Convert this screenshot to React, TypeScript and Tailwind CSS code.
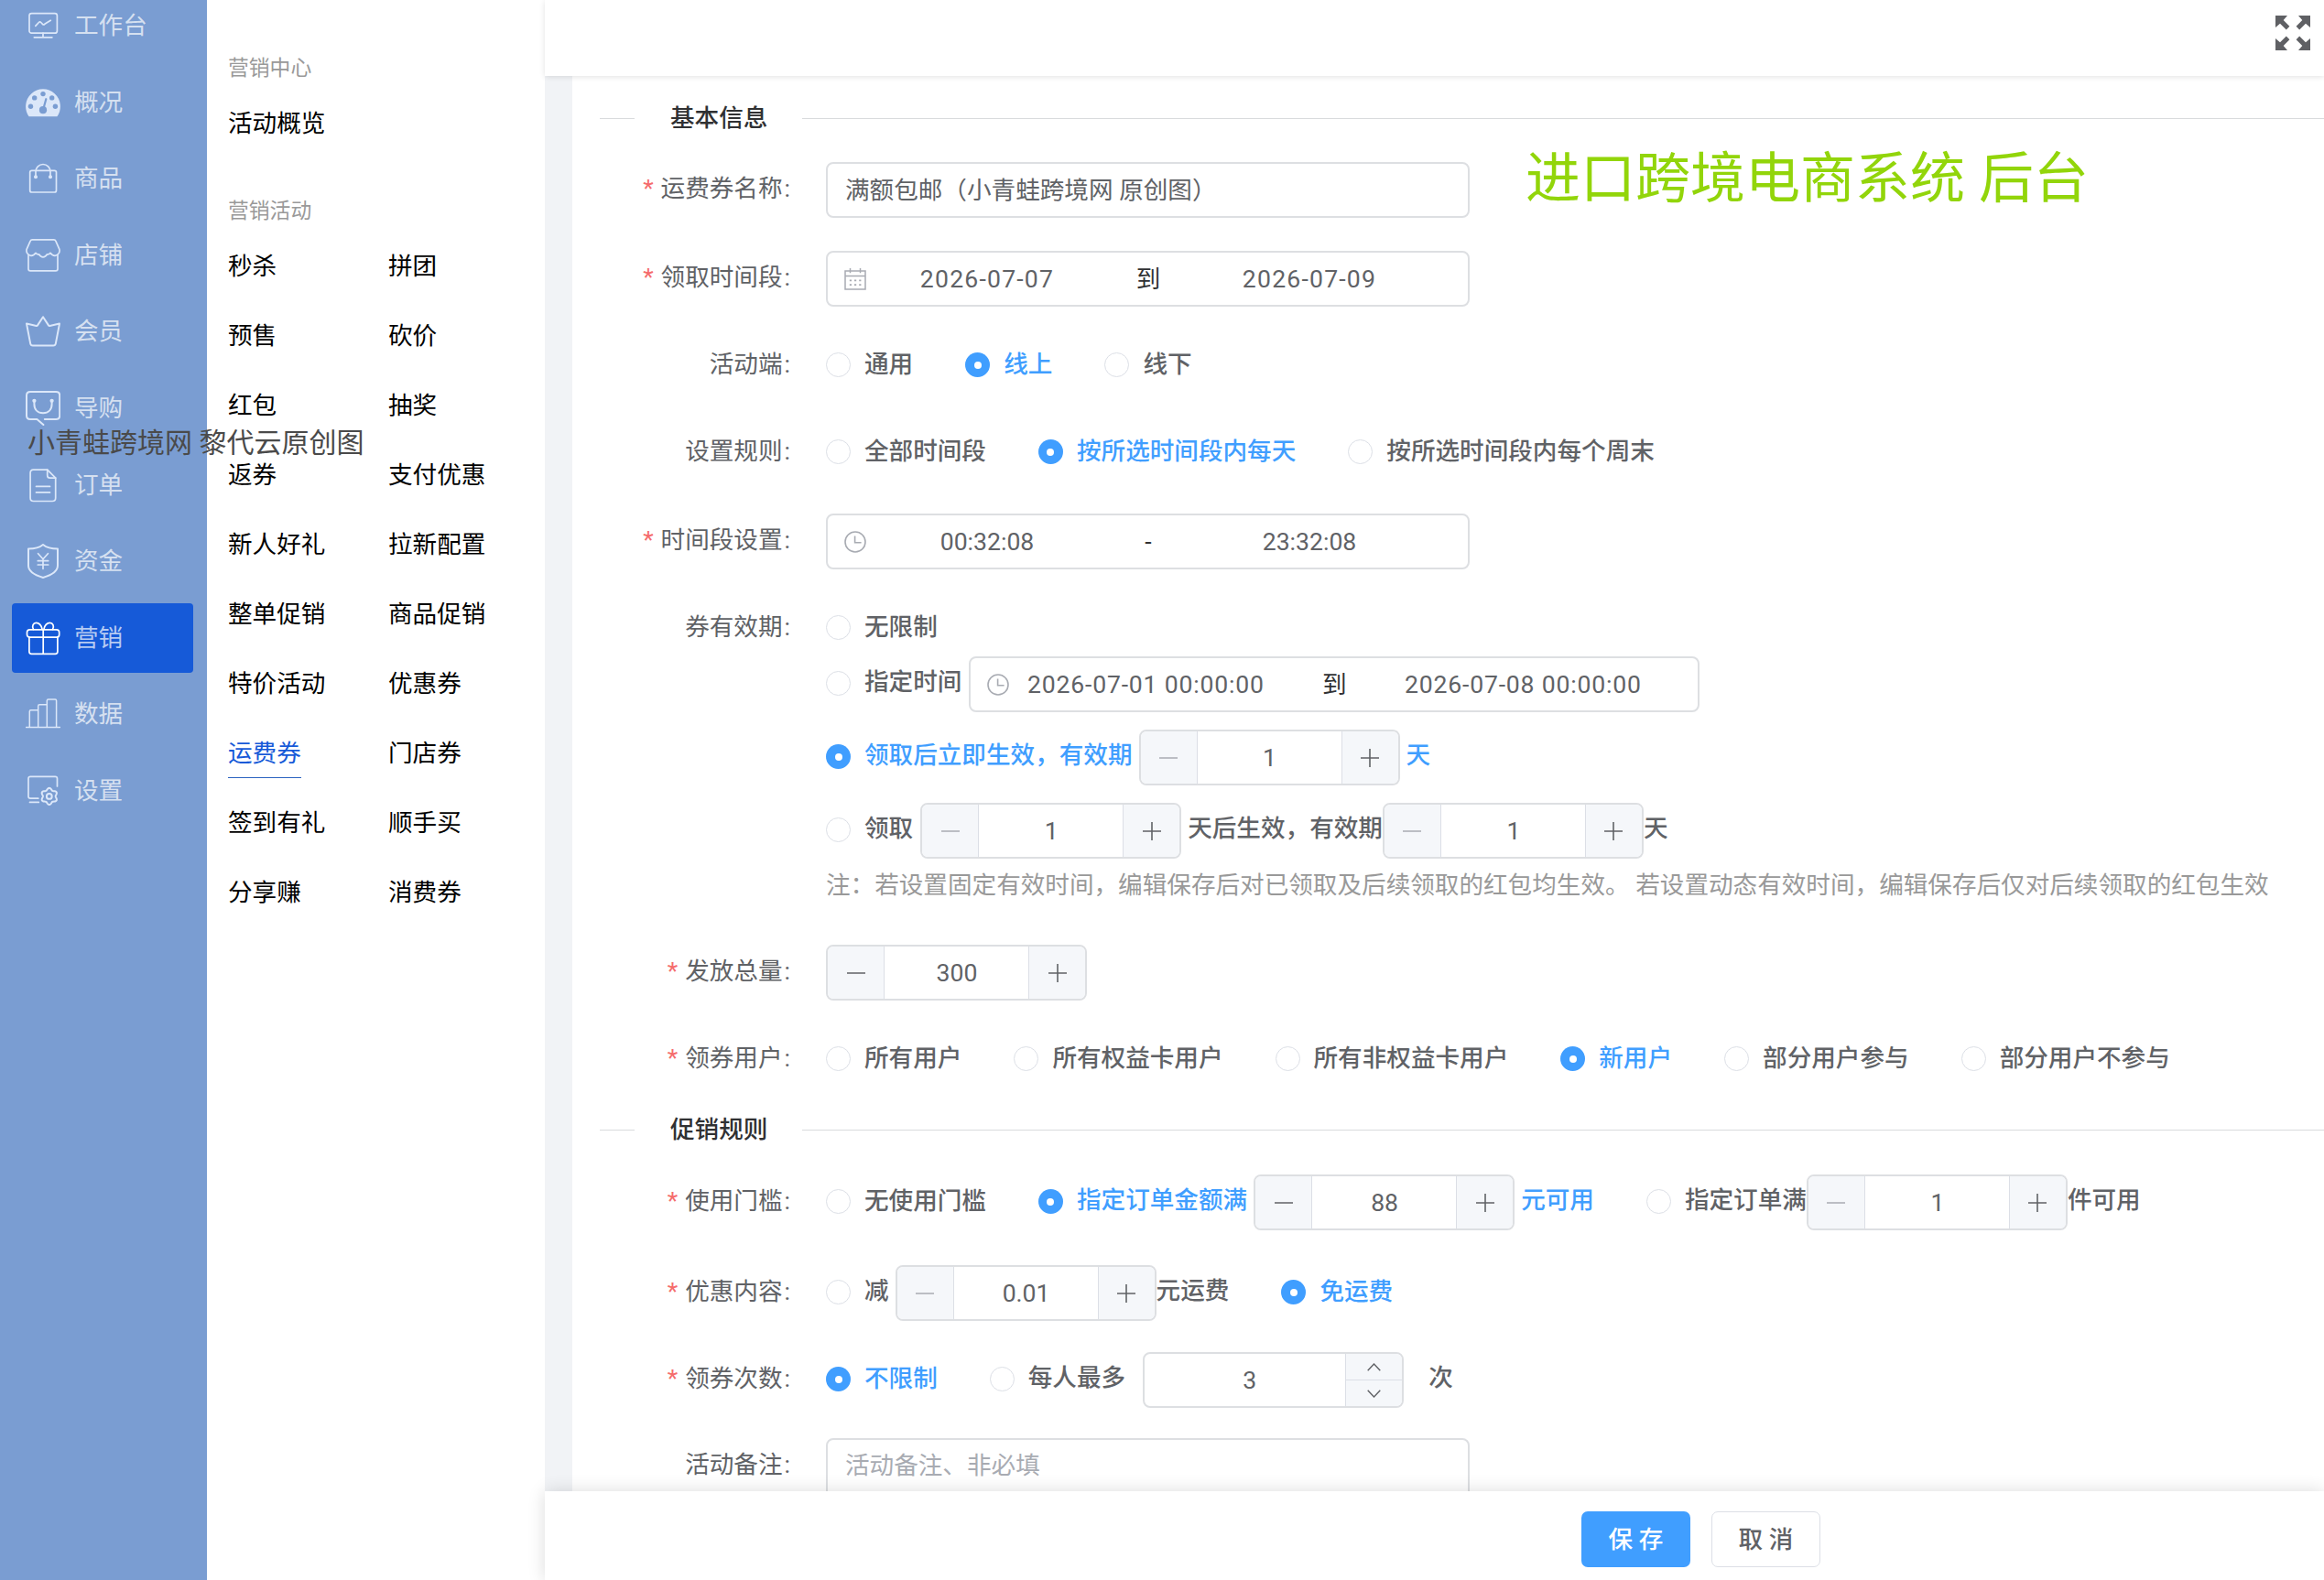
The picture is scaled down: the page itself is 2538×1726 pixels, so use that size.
import React, { ReactNode, useState } from "react";
import clsx from "clsx";

/* ---------- sidebar icons (38x38 canvas) ---------- */

function gearPath(cx: number, cy: number) {
  const points: string[] = [];
  for (let i = 0; i < 96; i++) {
    const a = (i / 96) * Math.PI * 2;
    const r = 8 + 1.1 * Math.cos(6 * (a + Math.PI / 2));
    points.push(`${(cx + r * Math.cos(a)).toFixed(2)} ${(cy + r * Math.sin(a)).toFixed(2)}`);
  }
  return `M${points.join("L")}Z`;
}

const icons: Record<string, ReactNode> = {
  workbench: (
    <>
      <rect x="4" y="5.6" width="30.4" height="21.6" rx="2.5" />
      <path d="M19 27.2v4.4M9.3 31.8h19.6M10.8 19.4l3.6-3.9c.8-.8 1.5-.8 2.3 0l1.8 1.8c.8.8 1.5.8 2.3 0l6.5-4" />
    </>
  ),
  overview: (
    <>
      <path d="M3.6 34.2A18.9 18.9 0 1 1 34.4 34.2Z" fill="currentColor" stroke="none" />
      <g fill="#7a9dd2" stroke="none">
        <circle cx="19" cy="9.6" r="2.7" />
        <circle cx="9.7" cy="13.9" r="2.7" />
        <circle cx="28.7" cy="13.9" r="2.7" />
        <circle cx="5.5" cy="23.2" r="2.7" />
        <circle cx="32.4" cy="23.2" r="2.7" />
        <circle cx="19" cy="27.2" r="4.1" />
      </g>
      <path d="M22.3 15.2L19.6 25" stroke="#7a9dd2" strokeWidth="2.2" />
    </>
  ),
  goods: (
    <>
      <rect x="4.7" y="10.3" width="28.8" height="23.7" rx="2" />
      <path d="M11 17v-5.5a8 8 0 0 1 16 0V17" />
      <circle cx="11" cy="17.2" r="1.2" fill="currentColor" />
      <circle cx="27" cy="17.2" r="1.2" fill="currentColor" />
    </>
  ),
  store: (
    <>
      <path d="M7.2 1.9h23.6c1 0 1.7.4 2 1.2l4 9c1 3-.8 6.8-4.8 7.2-2.2 0-3.6-1-5-3-1.5 1.9-2.5 1.5-3.5 1.5-1.5 2.4-2.9 3-4.5 3s-3-.6-4.5-3c-1 0-2 .4-3.5-1.5-1.4 2-2.8 3-5 3C2 18.9.2 15.1 1.2 12.1l4-9c.3-.8 1-1.2 2-1.2Z" />
      <path d="M3 18.5v15.3c0 1.3.8 2.1 2.1 2.1h27.8c1.3 0 2.1-.8 2.1-2.1V18.5" />
    </>
  ),
  member: (
    <path
      strokeWidth="2"
      d="M19 3.2l6 9.2c.3.5.8.7 1.3.6L37 10.6l-4.2 21.8c-.3 1.5-1.1 2.2-2.6 2.2H7.8c-1.5 0-2.3-.7-2.6-2.2L1 10.6 11.7 13c.5.1 1-.1 1.3-.6Z"
    />
  ),
  guide: (
    <>
      <path
        strokeWidth="2"
        d="M20.8 31h12.4c2.6 0 4-1.4 4-4V5c0-2.6-1.4-4-4-4H5C2.4 1 1 2.4 1 5v22c0 2.6 1.4 4 4 4h7.4l7 6"
      />
      <path strokeWidth="2" d="M9.4 11v3.5c0 6 3.8 9.7 9.6 9.7s9.6-3.7 9.6-9.7V11" />
      <circle cx="9.4" cy="10.8" r="1.3" fill="currentColor" />
      <circle cx="28.6" cy="10.8" r="1.3" fill="currentColor" />
    </>
  ),
  order: (
    <>
      <path d="M8.3 2.2h15.4l9 9V33c0 2.2-1.2 3.5-3.5 3.5H8.6c-2.3 0-3.5-1.3-3.5-3.5V5.6c0-2.2 1.1-3.4 3.2-3.4Z" />
      <path d="M23.7 2.2v6c0 2 1 3 3 3h6M11.5 20.4h15M11.5 26.9h15" />
    </>
  ),
  fund: (
    <>
      <path
        strokeWidth="2"
        d="M19 1c3.6 3 8.5 4.6 16 4.6v18.2c0 6-5.8 10.2-16 13.2C8.8 34 3 29.8 3 23.8V5.6C10.5 5.6 15.4 4 19 1Z"
      />
      <path d="M13.6 10.7l5.4 6 5.4-6M19 16.7v10.6M13.3 18.7h11.4M13.3 23h11.4" />
    </>
  ),
  marketing: (
    <>
      <rect x="1.5" y="9.8" width="35.2" height="8.4" rx="3" />
      <path d="M3.9 18.2v15.6c0 1.6.9 2.5 2.5 2.5h26c1.6 0 2.5-.9 2.5-2.5V18.2M19.2 9.8v26.5" />
      <path d="M8.5 9.6c-2-3.8-.2-7.2 3-7.2 3.2 0 5.7 2.9 6.7 7.2M29.5 9.6c2-3.8.2-7.2-3-7.2-3.2 0-5.7 2.9-6.7 7.2" />
    </>
  ),
  data: (
    <path
      strokeWidth="1.5"
      d="M.5 33.5h37M4.3 33.5V16.2c0-.9.5-1.4 1.4-1.4h7.9M13.7 33.5V10.2c0-.9.5-1.4 1.4-1.4h8.1M23.3 33.5V4.4c0-.9.5-1.4 1.4-1.4h7.5c.9 0 1.4.5 1.4 1.4v29.1"
    />
  ),
  setting: (
    <>
      <path d="M34.5 14V5.5c0-1.5-.7-2.2-2.2-2.2H5.2C3.7 3.3 3 4 3 5.5V25c0 1.5.7 2.2 2.2 2.2h8.6M4.5 31.4h9.8" />
      <path d={gearPath(25.8, 24.9)} strokeWidth="2" />
      <circle cx="25.8" cy="24.9" r="2.9" strokeWidth="2" />
    </>
  ),
};

const navItems = [
  { icon: "workbench", label: "工作台" },
  { icon: "overview", label: "概况" },
  { icon: "goods", label: "商品" },
  { icon: "store", label: "店铺" },
  { icon: "member", label: "会员" },
  { icon: "guide", label: "导购" },
  { icon: "order", label: "订单" },
  { icon: "fund", label: "资金" },
  { icon: "marketing", label: "营销", active: true },
  { icon: "data", label: "数据" },
  { icon: "setting", label: "设置" },
];

const activities = [
  "秒杀", "拼团",
  "预售", "砍价",
  "红包", "抽奖",
  "返券", "支付优惠",
  "新人好礼", "拉新配置",
  "整单促销", "商品促销",
  "特价活动", "优惠券",
  "运费券", "门店券",
  "签到有礼", "顺手买",
  "分享赚", "消费券",
];

function Sidebar() {
  return (
    <aside className="w-[226px] shrink-0 overflow-hidden bg-[#7a9dd2]">
      <nav className="-mt-[10px] flex flex-col gap-[7.6px] pl-[13px]">
        {navItems.map((item) => (
          <a
            key={item.label}
            className={clsx(
              "flex h-[76px] w-[198px] items-center gap-[15px] rounded-[4px] pl-[15px]",
              item.active ? "bg-[#165ad8] text-white" : "text-[#dbe7f9]"
            )}
          >
            <svg
              className="size-[38px] shrink-0"
              viewBox="0 0 38 38"
              fill="none"
              stroke="currentColor"
              strokeWidth="1.7"
              strokeLinecap="round"
              strokeLinejoin="round"
            >
              {icons[item.icon]}
            </svg>
            <span className="text-white/70">{item.label}</span>
          </a>
        ))}
      </nav>
    </aside>
  );
}

function SubMenu() {
  return (
    <aside className="w-[369px] shrink-0 bg-white pl-[23px] pt-[54px] text-black">
      <div className="h-[42px] text-[22.8px] leading-[42px] text-[#999]">营销中心</div>
      <div className="mt-px h-[76px] leading-[76px]">活动概览</div>
      <div className="mt-[37px] h-[42px] text-[22.8px] leading-[42px] text-[#999]">营销活动</div>
      <div className="mt-px grid grid-cols-[175px_1fr]">
        {activities.map((name) => (
          <div key={name} className="h-[76px] leading-[76px]">
            <span
              className={clsx(
                name === "运费券" && "inline-block h-[65px] border-b-[1.5px] border-[#2a62c0] text-[#165ad8]"
              )}
            >
              {name}
            </span>
          </div>
        ))}
      </div>
    </aside>
  );
}

/* ---------- form controls ---------- */

interface RowProps {
  label: string;
  required?: boolean;
  className?: string;
  children: ReactNode;
}

function Row({ label, required, className = "h-[95px]", children }: RowProps) {
  return (
    <div className={clsx("flex shrink-0", className)}>
      <div className="flex h-[58px] w-[277px] shrink-0 items-center justify-end pr-[39px]">
        {required && <span className="mr-[8px] text-[#f56c6c]">*</span>}
        {label}
        <span className="ml-[2px]">:</span>
      </div>
      <div className="flex flex-col">{children}</div>
    </div>
  );
}

function Line({ className, children }: { className?: string; children: ReactNode }) {
  return <div className={clsx("flex h-[61px] shrink-0 items-center", className)}>{children}</div>;
}

function Dot({ checked }: { checked?: boolean }) {
  return (
    <span
      className={clsx(
        "mr-[15px] mb-[2px] flex size-[27px] shrink-0 items-center justify-center rounded-full",
        checked ? "bg-[#409eff]" : "border border-[#dcdfe6] bg-white"
      )}
    >
      {checked && <span className="size-[8px] rounded-full bg-white" />}
    </span>
  );
}

function Radio({ checked, children }: { checked?: boolean; children: ReactNode }) {
  return (
    <label className={clsx("mr-[57px] flex items-center whitespace-nowrap font-medium", checked && "text-[#409eff]")}>
      <Dot checked={checked} />
      {typeof children === "string" ? <span className="mb-[3px]">{children}</span> : children}
    </label>
  );
}

// text that shares a line with an input sits slightly above its middle
function T({ className, children }: { className?: string; children: ReactNode }) {
  return <span className={clsx("mb-[6px] leading-[40px]", className)}>{children}</span>;
}

function Minus() {
  return (
    <svg className="h-[22px] w-5" viewBox="0 0 20 22" stroke="currentColor" strokeWidth="1.6">
      <path d="M0 11h20" />
    </svg>
  );
}

function Plus() {
  return (
    <svg className="h-[22px] w-5" viewBox="0 0 20 22" stroke="currentColor" strokeWidth="1.6">
      <path d="M0 11h20M10 1v20" />
    </svg>
  );
}

function InputNumber({ value, atMin }: { value: string; atMin?: boolean }) {
  return (
    <span className="flex h-[61px] w-[285px] shrink-0 overflow-hidden rounded-[8px] border-2 border-[#dddfe2] bg-white font-normal text-[#606266]">
      <span
        className={clsx(
          "flex w-[62px] items-center justify-center border-r border-[#dcdfe6] bg-[#f5f7fa]",
          atMin && "text-[#a8abb2]"
        )}
      >
        <Minus />
      </span>
      <span className="flex flex-1 items-center justify-center pl-px">{value}</span>
      <span className="flex w-[62px] items-center justify-center border-l border-[#dcdfe6] bg-[#f5f7fa]">
        <Plus />
      </span>
    </span>
  );
}

function CalendarIcon() {
  return (
    <svg className="size-6 shrink-0" viewBox="0 0 24 24" fill="none" stroke="#a8abb2" strokeWidth="1.5">
      <path d="M1 3h22v20H1zM1 8.6h22M6.5 0v5.3M17.5 0v5.3" />
      <path
        d="M5.8 13.3h2.2M11 13.3h2.2M16.2 13.3h2.2M5.8 18.2h2.2M11 18.2h2.2M16.2 18.2h2.2"
        strokeWidth="1.8"
      />
    </svg>
  );
}

function ClockIcon() {
  return (
    <svg className="size-6 shrink-0" viewBox="0 0 24 24" fill="none" stroke="#a8abb2" strokeWidth="1.6">
      <circle cx="12" cy="12" r="11" />
      <path d="M11.6 5.5v7.3h7" />
    </svg>
  );
}

interface RangeProps {
  icon: ReactNode;
  from: string;
  to: string;
  sep: string;
  className: string;
  fieldClass: string;
}

function Range({ icon, from, to, sep, className, fieldClass }: RangeProps) {
  return (
    <span
      className={clsx(
        "flex h-[61px] shrink-0 items-center rounded-[8px] border-2 border-[#dddfe2] bg-white pl-[18px] font-normal text-[#606266]",
        className
      )}
    >
      {icon}
      <span className={clsx("text-center whitespace-nowrap", fieldClass)}>{from}</span>
      <span className="flex-1 text-center text-[#303133]">{sep}</span>
      <span className={clsx("text-center whitespace-nowrap", fieldClass)}>{to}</span>
    </span>
  );
}

function Divider({ children }: { children: ReactNode }) {
  return (
    <div className="flex h-[40px] shrink-0 items-center pl-[30px]">
      <span className="h-px w-[38px] bg-[#d9dbdd]" />
      <span className="pr-[38px] pl-[39px] font-medium text-[#303133]">{children}</span>
      <span className="h-px flex-1 bg-[#d9dbdd]" />
    </div>
  );
}

function FullscreenIcon() {
  const arrow = "0,0 13,0 8.7,5 15.4,11.8 11.8,15.4 5,8.7 0,13";
  return (
    <svg className="size-[38px]" viewBox="0 0 38 38" fill="#5f6064">
      {[0, 90, 180, 270].map((deg) => (
        <polygon key={deg} points={arrow} transform={`rotate(${deg} 19 19)`} />
      ))}
    </svg>
  );
}

function CouponForm() {
  const [name] = useState("满额包邮（小青蛙跨境网 原创图）");

  return (
    <div className="flex flex-1 flex-col overflow-hidden bg-white pt-[26px]">
      <Divider>基本信息</Divider>
      <div className="h-[28px] shrink-0" />

      <Row label="运费券名称" required className="h-[97px]">
        <div className="flex h-[61px] w-[703px] items-center rounded-[8px] border-2 border-[#dddfe2] pl-[19px]">{name}</div>
      </Row>

      <Row label="领取时间段" required>
        <Range
          icon={<CalendarIcon />}
          from="2026-07-07"
          to="2026-07-09"
          sep="到"
          className="w-[703px] pr-[41px]"
          fieldClass="w-[264px] tracking-[1.2px]"
        />
      </Row>

      <Row label="活动端">
        <Line>
          <Radio>通用</Radio>
          <Radio checked>线上</Radio>
          <Radio>线下</Radio>
        </Line>
      </Row>

      <Row label="设置规则" className="h-[97px]">
        <Line>
          <Radio>全部时间段</Radio>
          <Radio checked>按所选时间段内每天</Radio>
          <Radio>按所选时间段内每个周末</Radio>
        </Line>
      </Row>

      <Row label="时间段设置" required>
        <Range
          icon={<ClockIcon />}
          from="00:32:08"
          to="23:32:08"
          sep="-"
          className="w-[703px] pr-[41px]"
          fieldClass="w-[264px]"
        />
      </Row>

      <Row label="券有效期" className="h-[376px]">
        <Line>
          <Radio>无限制</Radio>
        </Line>
        <Line className="font-medium">
          <Dot />
          <T className="mr-[8px]">指定时间</T>
          <Range
            icon={<ClockIcon />}
            from="2026-07-01 00:00:00"
            to="2026-07-08 00:00:00"
            sep="到"
            className="w-[798px] pr-[42px]"
            fieldClass="w-[298px] tracking-[0.8px]"
          />
        </Line>
        <Line className="mt-[19px] font-medium text-[#409eff]">
          <Dot checked />
          <T className="mr-[7px]">领取后立即生效，有效期</T>
          <InputNumber value="1" atMin />
          <T className="ml-[7px]">天</T>
        </Line>
        <Line className="mt-[19px] font-medium">
          <Dot />
          <T className="mr-[8px]">领取</T>
          <InputNumber value="1" atMin />
          <T className="ml-[7px]">天后生效，有效期</T>
          <InputNumber value="1" atMin />
          <T>天</T>
        </Line>
        <p className="h-[58px] leading-[58px] whitespace-nowrap text-[#999]">
          注：若设置固定有效时间，编辑保存后对已领取及后续领取的红包均生效。 若设置动态有效时间，编辑保存后仅对后续领取的红包生效
        </p>
      </Row>

      <Row label="发放总量" required>
        <InputNumber value="300" />
      </Row>

      <Row label="领券用户" required className="h-[87px]">
        <Line>
          <Radio>所有用户</Radio>
          <Radio>所有权益卡用户</Radio>
          <Radio>所有非权益卡用户</Radio>
          <Radio checked>新用户</Radio>
          <Radio>部分用户参与</Radio>
          <Radio>部分用户不参与</Radio>
        </Line>
      </Row>

      <Divider>促销规则</Divider>
      <div className="h-[29px] shrink-0" />

      <Row label="使用门槛" required className="h-[99px]">
        <Line>
          <Radio>无使用门槛</Radio>
          <Radio checked>
            <T className="mr-[7px]">指定订单金额满</T>
            <InputNumber value="88" />
            <T className="ml-[7px]">元可用</T>
          </Radio>
          <Radio>
            <T>指定订单满</T>
            <InputNumber value="1" atMin />
            <T>件可用</T>
          </Radio>
        </Line>
      </Row>

      <Row label="优惠内容" required>
        <Line>
          <Radio>
            <T className="mr-[7px]">减</T>
            <InputNumber value="0.01" atMin />
            <T>元运费</T>
          </Radio>
          <Radio checked>免运费</Radio>
        </Line>
      </Row>

      <Row label="领券次数" required className="h-[94px]">
        <Line>
          <Radio checked>不限制</Radio>
          <Radio>
            <T className="mr-[19px]">每人最多</T>
            <span className="flex h-[61px] w-[285px] overflow-hidden rounded-[8px] border-2 border-[#dddfe2] font-normal">
              <span className="flex flex-1 items-center justify-center pl-[10px]">3</span>
              <span className="flex w-[62px] flex-col border-l border-[#dcdfe6] bg-[#f5f7fa]">
                <span className="flex flex-1 items-center justify-center border-b border-[#dcdfe6]">
                  <svg className="h-[9px] w-[15px]" viewBox="0 0 15 9" fill="none" stroke="currentColor" strokeWidth="1.4">
                    <path d="M.7 8.3L7.5 1l6.8 7.3" />
                  </svg>
                </span>
                <span className="flex flex-1 items-center justify-center">
                  <svg className="h-[9px] w-[15px]" viewBox="0 0 15 9" fill="none" stroke="currentColor" strokeWidth="1.4">
                    <path d="M.7.7L7.5 8l6.8-7.3" />
                  </svg>
                </span>
              </span>
            </span>
            <T className="ml-[27px]">次</T>
          </Radio>
        </Line>
      </Row>

      <Row label="活动备注" className="h-[120px]">
        <div className="h-[110px] w-[703px] rounded-[8px] border-2 border-[#dddfe2] pl-[19px] leading-[55px] text-[#a8abb2]">
          活动备注、非必填
        </div>
      </Row>
    </div>
  );
}

export default function App() {
  return (
    <div className="relative flex h-[1726px] w-[2538px] overflow-hidden bg-white font-['Roboto','Noto_Sans_CJK_SC',sans-serif] text-[26.6px] leading-[38px] text-[#606266]">
      <Sidebar />
      <SubMenu />

      <div className="flex min-w-0 flex-1 flex-col">
        <header className="z-10 flex h-[83px] shrink-0 justify-end bg-white pr-[15px] pt-[17px] shadow-[0_1px_6px_rgba(0,0,0,0.12)]">
          <FullscreenIcon />
        </header>

        <main className="flex min-h-0 flex-1 bg-[#f1f3f6] pl-[30px]">
          <CouponForm />
        </main>

        <footer className="z-10 flex h-[97px] shrink-0 items-start gap-[23px] bg-white pl-[1132px] pt-[22px] font-medium shadow-[0_0_18px_rgba(0,0,0,0.14)]">
          <button className="h-[61px] w-[119px] rounded-[7px] bg-[#409eff] text-white">保 存</button>
          <button className="h-[61px] w-[119px] rounded-[7px] border border-[#dcdfe6] bg-white">取 消</button>
        </footer>
      </div>

      {/* watermarks */}
      <div className="absolute top-[463px] left-[30px] z-20 text-[30px] leading-[42px] whitespace-nowrap text-[#4a4a4a]">
        小青蛙跨境网 黎代云原创图
      </div>
      <div className="absolute top-[156px] left-[1666px] z-20 text-[60px] leading-[80px] whitespace-nowrap text-[#92d50a]">
        进口跨境电商系统 后台
      </div>
    </div>
  );
}
